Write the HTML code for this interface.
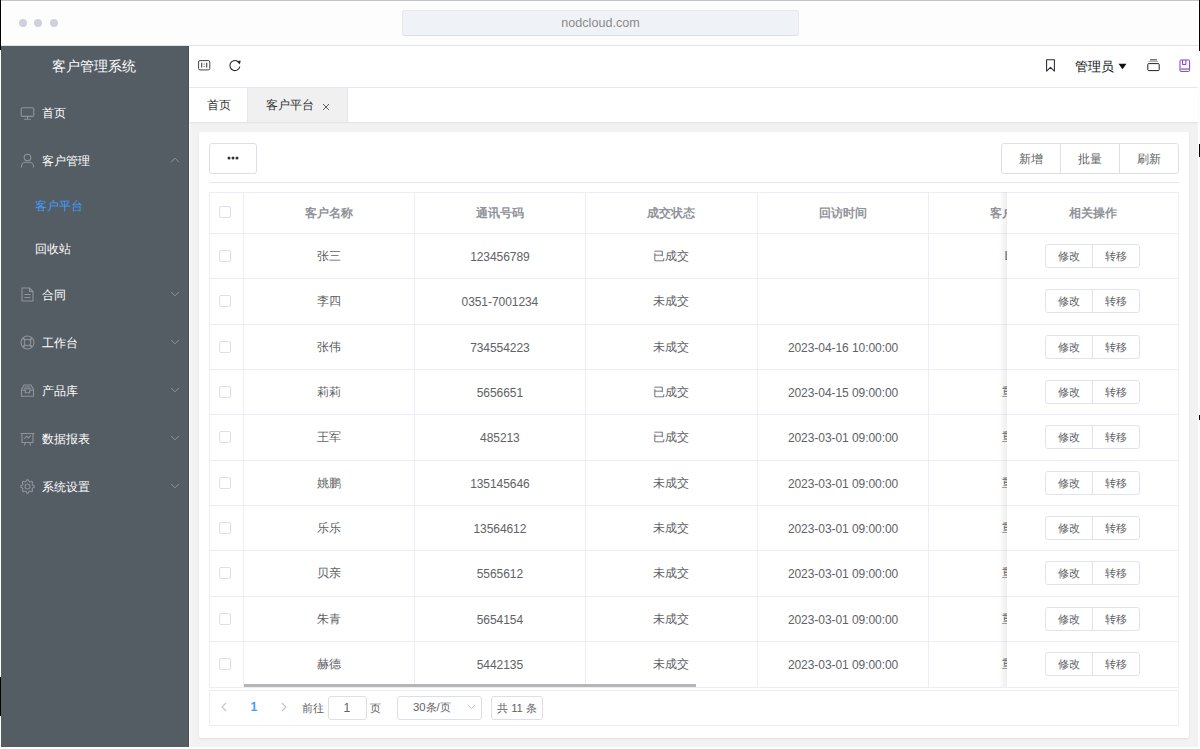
<!DOCTYPE html>
<html><head><meta charset="utf-8">
<style>
*{box-sizing:border-box;margin:0;padding:0}
html,body{width:1200px;height:749px;overflow:hidden;background:#fff;font-family:"Liberation Sans",sans-serif;font-weight:500}
.a{position:absolute}
#chrome{left:0;top:0;width:1200px;height:46px;background:#fdfdfe;border-top:1px solid #c4c4c4;border-bottom:1px solid #e2e3e6}
.dot{position:absolute;top:18px;width:8px;height:8px;border-radius:50%;background:#d0d1df}
#url{left:402px;top:10px;width:397px;height:26px;background:#eff2f6;border:1px solid #e6e8ec;border-bottom-color:#dedfe2;border-radius:3px;font-size:12.6px;color:#8a8a8a;text-align:center;line-height:24px}
#side{left:1px;top:46px;width:188px;height:701px;background:#545c64;border-right:1px solid #4a5058}
.mi{position:absolute;left:0;width:188px;color:#fff;font-size:12.2px;height:20px;line-height:20px}
.mi .t{position:absolute;left:42px;top:0.5px;white-space:nowrap}
.mi .ic{position:absolute;left:20px;top:3px;width:15px;height:15px}
.mi .ch{position:absolute;left:170px;top:7px;width:10px;height:6px}
.sub .t{left:34.5px}
#main{left:189px;top:46px;width:1009px;height:701px;background:#f2f2f2;border-left:1px solid #fff}
#hdr{left:189px;top:46px;width:1009px;height:42px;background:#fff;border-bottom:1px solid #e4e7ed}
#tabs{left:189px;top:88px;width:1009px;height:34px;background:#fff;box-shadow:0 1px 1.5px rgba(0,0,0,.07)}
.tab{position:absolute;top:0;height:33px;line-height:33px;font-size:12.2px;color:#333}
#card{left:199px;top:132px;width:990px;height:606px;background:#fff;border-radius:2px;box-shadow:0 1px 2px rgba(0,0,0,.08)}
.btn{position:absolute;border:1px solid #dcdfe6;border-radius:3px;background:#fff;color:#606266;font-size:12.2px;text-align:center}
.hl{position:absolute;height:1px;background:#ebeef5}
.vl{position:absolute;width:1px;background:#ebeef5}
.cell{position:absolute;height:20px;line-height:20px;font-size:12.2px;color:#606266;text-align:center;white-space:nowrap}
.num{font-size:12px;letter-spacing:-0.06px}
.hd{color:#909399;font-weight:bold}
.cb{position:absolute;width:12px;height:12px;border:1px solid #dcdfe6;border-radius:2px;background:#fff}
.ops{position:absolute;left:1045px;width:96px;height:24px}
.ops span{position:absolute;top:0;height:24px;width:48px;line-height:22px;text-align:center;font-size:11.3px;color:#606266;border:1px solid #e0e3e9;background:#fff}
.tabtxt{font-size:12.2px;color:#333;line-height:20px;white-space:nowrap}
.pg{font-size:11.3px;color:#606266;line-height:20px;white-space:nowrap}
.blk{position:absolute;background:#000;width:1px}
</style></head><body>
<div id="chrome" class="a">
  <div class="dot" style="left:19px"></div>
  <div class="dot" style="left:34px"></div>
  <div class="dot" style="left:50px"></div>
</div>
<div id="url" class="a">nodcloud.com</div>

<div id="side" class="a"></div>
<div id="sidebar">
<div class="a" style="left:0px;top:56.5px;width:188px;text-align:center;font-size:13.5px;color:#fff;line-height:20px;">客户管理系统</div>
<div class="mi" style="top:102px"><svg class="ic" viewBox="0 0 15 15" fill="none" stroke="#8f949a" stroke-width="1.1"><rect x="1.2" y="2.8" width="12.6" height="8.6" rx="1.5"/><path d="M7.5 11.4v2.6M4.2 14.2h6.6"/></svg><span class="t">首页</span></div>
<div class="mi" style="top:150.5px"><svg class="ic" style="top:2.5px" viewBox="0 0 15 15" fill="none" stroke="#8f949a" stroke-width="1.1"><circle cx="7.5" cy="4.5" r="3.3"/><path d="M1.5 14.5v-1.2c0-2.4 2-4 4.2-4h3.6c2.2 0 4.2 1.6 4.2 4v1.2"/></svg><span class="t">客户管理</span><svg class="ch" style="top:6.5px" viewBox="0 0 10 6" fill="none" stroke="#8f949a" stroke-width="1"><path d="M1 5.2L5 1.2L9 5.2"/></svg></div>
<div class="mi sub" style="top:195px;color:#409eff"><span class="t">客户平台</span></div>
<div class="mi sub" style="top:238.5px"><span class="t">回收站</span></div>
<div class="mi" style="top:284px"><svg class="ic" viewBox="0 0 15 15" fill="none" stroke="#8f949a" stroke-width="1.1"><path d="M2 1h7.5l3.5 3.5V14H2z"/><path d="M9.5 1v3.5H13M4.5 7.5h6M4.5 10.5h6"/></svg><span class="t">合同</span><svg class="ch" viewBox="0 0 10 6" fill="none" stroke="#8f949a" stroke-width="1"><path d="M1 0.8L5 4.8L9 0.8"/></svg></div>
<div class="mi" style="top:332px"><svg class="ic" viewBox="0 0 15 15" fill="none" stroke="#8f949a" stroke-width="1.1"><circle cx="7.5" cy="7.5" r="6.5"/><circle cx="7.5" cy="7.5" r="3.2"/><path d="M9.90 9.90L11.95 11.95M5.10 9.90L3.05 11.95M5.10 5.10L3.05 3.05M9.90 5.10L11.95 3.05" stroke-width="1.8"/></svg><span class="t">工作台</span><svg class="ch" viewBox="0 0 10 6" fill="none" stroke="#8f949a" stroke-width="1"><path d="M1 0.8L5 4.8L9 0.8"/></svg></div>
<div class="mi" style="top:380px"><svg class="ic" viewBox="0 0 15 15" fill="none" stroke="#8f949a" stroke-width="1.1"><path d="M1.5 13.3V6.5L4 2h7l2.5 4.5v6.8z"/><path d="M4.5 4h6M3.6 5.8h7.8M1.5 7.3h3.8v2.4h4.4V7.3h3.8"/></svg><span class="t">产品库</span><svg class="ch" viewBox="0 0 10 6" fill="none" stroke="#8f949a" stroke-width="1"><path d="M1 0.8L5 4.8L9 0.8"/></svg></div>
<div class="mi" style="top:428px"><svg class="ic" style="top:4px" viewBox="0 0 15 15" fill="none" stroke="#8f949a" stroke-width="1.1"><path d="M0.6 1.5h14M2 1.5v9h11v-9M5.5 10.5l-1.3 3M9.5 10.5l1.3 3"/><path d="M4.3 6.6l2.3-2.4 1.6 1.8 2.6-2.6"/></svg><span class="t">数据报表</span><svg class="ch" viewBox="0 0 10 6" fill="none" stroke="#8f949a" stroke-width="1"><path d="M1 0.8L5 4.8L9 0.8"/></svg></div>
<div class="mi" style="top:476px"><svg class="ic" viewBox="0 0 15 15" fill="none" stroke="#8f949a" stroke-width="1.1"><path d="M6.84 0.83L8.16 0.83L9.01 2.52L9.95 2.91L11.75 2.32L12.68 3.25L12.09 5.05L12.48 5.99L14.17 6.84L14.17 8.16L12.48 9.01L12.09 9.95L12.68 11.75L11.75 12.68L9.95 12.09L9.01 12.48L8.16 14.17L6.84 14.17L5.99 12.48L5.05 12.09L3.25 12.68L2.32 11.75L2.91 9.95L2.52 9.01L0.83 8.16L0.83 6.84L2.52 5.99L2.91 5.05L2.32 3.25L3.25 2.32L5.05 2.91L5.99 2.52z" stroke-linejoin="round"/><circle cx="7.5" cy="7.5" r="2.5"/></svg><span class="t">系统设置</span><svg class="ch" viewBox="0 0 10 6" fill="none" stroke="#8f949a" stroke-width="1"><path d="M1 0.8L5 4.8L9 0.8"/></svg></div>
</div>
<div id="main" class="a"></div>
<div id="hdr" class="a"></div>
<div id="tabs" class="a"></div>
<div id="card" class="a"></div>
<div class="btn" style="left:209px;top:143px;width:48px;height:31px"></div>
<svg class="a" style="left:226px;top:155px" width="14" height="6" viewBox="0 0 14 6"><circle cx="3" cy="3" r="1.5" fill="#333"/><circle cx="7" cy="3" r="1.5" fill="#333"/><circle cx="11" cy="3" r="1.5" fill="#333"/></svg>
<div class="btn" style="left:1001px;top:143px;width:178px;height:31px"></div>
<div class="vl" style="left:1060px;top:144px;height:29px;background:#dcdfe6"></div>
<div class="vl" style="left:1119px;top:144px;height:29px;background:#dcdfe6"></div>
<div class="cell" style="left:1001px;top:148.5px;width:59px;">新增</div>
<div class="cell" style="left:1060px;top:148.5px;width:59px;">批量</div>
<div class="cell" style="left:1119px;top:148.5px;width:59px;">刷新</div>
<div class="hl" style="left:209px;top:182px;width:970px;background:#e4e7ed"></div>
<div class="a" style="left:209px;top:192px;width:970px;height:495.8px;background:#fff"></div>
<div class="hl" style="left:209px;top:192px;width:970px"></div>
<div class="hl" style="left:209px;top:232.8px;width:970px"></div>
<div class="hl" style="left:209px;top:278.2px;width:970px"></div>
<div class="hl" style="left:209px;top:323.5px;width:970px"></div>
<div class="hl" style="left:209px;top:368.9px;width:970px"></div>
<div class="hl" style="left:209px;top:414.2px;width:970px"></div>
<div class="hl" style="left:209px;top:459.6px;width:970px"></div>
<div class="hl" style="left:209px;top:504.9px;width:970px"></div>
<div class="hl" style="left:209px;top:550.3px;width:970px"></div>
<div class="hl" style="left:209px;top:595.6px;width:970px"></div>
<div class="hl" style="left:209px;top:641.0px;width:970px"></div>
<div class="hl" style="left:209px;top:687px;width:970px"></div>
<div class="vl" style="left:209px;top:192px;height:494.8px"></div>
<div class="vl" style="left:243px;top:192px;height:494.8px"></div>
<div class="vl" style="left:414px;top:192px;height:494.8px"></div>
<div class="vl" style="left:585px;top:192px;height:494.8px"></div>
<div class="vl" style="left:757px;top:192px;height:494.8px"></div>
<div class="vl" style="left:928px;top:192px;height:494.8px"></div>
<div class="cell hd" style="left:242.8px;top:202.9px;width:171.6px">客户名称</div>
<div class="cell hd" style="left:414.4px;top:202.9px;width:171.0px">通讯号码</div>
<div class="cell hd" style="left:585.4px;top:202.9px;width:172.1px">成交状态</div>
<div class="cell hd" style="left:757.5px;top:202.9px;width:171.1px">回访时间</div>
<div class="cell hd" style="left:928.6px;top:202.9px;width:171.4px">客户等级</div>
<div class="cb" style="left:219px;top:206px"></div>
<div class="cb" style="left:219px;top:250.0px"></div>
<div class="cell" style="left:242.8px;top:246.0px;width:171.6px">张三</div>
<div class="cell num" style="left:414.4px;top:247.0px;width:171.0px">123456789</div>
<div class="cell" style="left:585.4px;top:246.0px;width:172.1px">已成交</div>
<div class="cell" style="left:928.6px;top:246.0px;width:171.4px">L</div>
<div class="cb" style="left:219px;top:295.3px"></div>
<div class="cell" style="left:242.8px;top:291.3px;width:171.6px">李四</div>
<div class="cell num" style="left:414.4px;top:292.3px;width:171.0px">0351-7001234</div>
<div class="cell" style="left:585.4px;top:291.3px;width:172.1px">未成交</div>
<div class="cb" style="left:219px;top:340.7px"></div>
<div class="cell" style="left:242.8px;top:336.7px;width:171.6px">张伟</div>
<div class="cell num" style="left:414.4px;top:337.7px;width:171.0px">734554223</div>
<div class="cell" style="left:585.4px;top:336.7px;width:172.1px">未成交</div>
<div class="cell num" style="left:757.5px;top:337.7px;width:171.1px">2023-04-16 10:00:00</div>
<div class="cb" style="left:219px;top:386.0px"></div>
<div class="cell" style="left:242.8px;top:382.0px;width:171.6px">莉莉</div>
<div class="cell num" style="left:414.4px;top:383.0px;width:171.0px">5656651</div>
<div class="cell" style="left:585.4px;top:382.0px;width:172.1px">已成交</div>
<div class="cell num" style="left:757.5px;top:383.0px;width:171.1px">2023-04-15 09:00:00</div>
<div class="cell" style="left:928.6px;top:382.0px;width:171.4px">重点</div>
<div class="cb" style="left:219px;top:431.4px"></div>
<div class="cell" style="left:242.8px;top:427.4px;width:171.6px">王军</div>
<div class="cell num" style="left:414.4px;top:428.4px;width:171.0px">485213</div>
<div class="cell" style="left:585.4px;top:427.4px;width:172.1px">已成交</div>
<div class="cell num" style="left:757.5px;top:428.4px;width:171.1px">2023-03-01 09:00:00</div>
<div class="cell" style="left:928.6px;top:427.4px;width:171.4px">重点</div>
<div class="cb" style="left:219px;top:476.7px"></div>
<div class="cell" style="left:242.8px;top:472.7px;width:171.6px">姚鹏</div>
<div class="cell num" style="left:414.4px;top:473.7px;width:171.0px">135145646</div>
<div class="cell" style="left:585.4px;top:472.7px;width:172.1px">未成交</div>
<div class="cell num" style="left:757.5px;top:473.7px;width:171.1px">2023-03-01 09:00:00</div>
<div class="cell" style="left:928.6px;top:472.7px;width:171.4px">重点</div>
<div class="cb" style="left:219px;top:522.1px"></div>
<div class="cell" style="left:242.8px;top:518.1px;width:171.6px">乐乐</div>
<div class="cell num" style="left:414.4px;top:519.1px;width:171.0px">13564612</div>
<div class="cell" style="left:585.4px;top:518.1px;width:172.1px">未成交</div>
<div class="cell num" style="left:757.5px;top:519.1px;width:171.1px">2023-03-01 09:00:00</div>
<div class="cell" style="left:928.6px;top:518.1px;width:171.4px">重点</div>
<div class="cb" style="left:219px;top:567.4px"></div>
<div class="cell" style="left:242.8px;top:563.4px;width:171.6px">贝亲</div>
<div class="cell num" style="left:414.4px;top:564.4px;width:171.0px">5565612</div>
<div class="cell" style="left:585.4px;top:563.4px;width:172.1px">未成交</div>
<div class="cell num" style="left:757.5px;top:564.4px;width:171.1px">2023-03-01 09:00:00</div>
<div class="cell" style="left:928.6px;top:563.4px;width:171.4px">重点</div>
<div class="cb" style="left:219px;top:612.8px"></div>
<div class="cell" style="left:242.8px;top:608.8px;width:171.6px">朱青</div>
<div class="cell num" style="left:414.4px;top:609.8px;width:171.0px">5654154</div>
<div class="cell" style="left:585.4px;top:608.8px;width:172.1px">未成交</div>
<div class="cell num" style="left:757.5px;top:609.8px;width:171.1px">2023-03-01 09:00:00</div>
<div class="cell" style="left:928.6px;top:608.8px;width:171.4px">重点</div>
<div class="cb" style="left:219px;top:658.1px"></div>
<div class="cell" style="left:242.8px;top:654.1px;width:171.6px">赫德</div>
<div class="cell num" style="left:414.4px;top:655.1px;width:171.0px">5442135</div>
<div class="cell" style="left:585.4px;top:654.1px;width:172.1px">未成交</div>
<div class="cell num" style="left:757.5px;top:655.1px;width:171.1px">2023-03-01 09:00:00</div>
<div class="cell" style="left:928.6px;top:654.1px;width:171.4px">重点</div>
<div class="a" style="left:999px;top:192px;width:9px;height:494.8px;background:linear-gradient(to right,rgba(0,0,0,0),rgba(0,0,0,.08))"></div>
<div class="a" style="left:1004.5px;top:245.5px;font-size:12.2px;color:#606266;line-height:20px">L</div>
<div class="a" style="left:1007.3px;top:192px;width:171.5px;height:495.8px;background:#fff;border-right:1px solid #ebeef5"></div>
<div class="hl" style="left:1007px;top:192px;width:172px"></div>
<div class="hl" style="left:1007px;top:232.8px;width:172px"></div>
<div class="hl" style="left:1007px;top:278.2px;width:172px"></div>
<div class="hl" style="left:1007px;top:323.5px;width:172px"></div>
<div class="hl" style="left:1007px;top:368.9px;width:172px"></div>
<div class="hl" style="left:1007px;top:414.2px;width:172px"></div>
<div class="hl" style="left:1007px;top:459.6px;width:172px"></div>
<div class="hl" style="left:1007px;top:504.9px;width:172px"></div>
<div class="hl" style="left:1007px;top:550.3px;width:172px"></div>
<div class="hl" style="left:1007px;top:595.6px;width:172px"></div>
<div class="hl" style="left:1007px;top:641.0px;width:172px"></div>
<div class="hl" style="left:1007px;top:687px;width:172px"></div>
<div class="cell hd" style="left:1007.3px;top:202.9px;width:171.5px">相关操作</div>
<div class="ops" style="top:244.0px"><span style="left:0;border-radius:3px 0 0 3px">修改</span><span style="left:47px;border-radius:0 3px 3px 0">转移</span></div>
<div class="ops" style="top:289.3px"><span style="left:0;border-radius:3px 0 0 3px">修改</span><span style="left:47px;border-radius:0 3px 3px 0">转移</span></div>
<div class="ops" style="top:334.7px"><span style="left:0;border-radius:3px 0 0 3px">修改</span><span style="left:47px;border-radius:0 3px 3px 0">转移</span></div>
<div class="ops" style="top:380.0px"><span style="left:0;border-radius:3px 0 0 3px">修改</span><span style="left:47px;border-radius:0 3px 3px 0">转移</span></div>
<div class="ops" style="top:425.4px"><span style="left:0;border-radius:3px 0 0 3px">修改</span><span style="left:47px;border-radius:0 3px 3px 0">转移</span></div>
<div class="ops" style="top:470.7px"><span style="left:0;border-radius:3px 0 0 3px">修改</span><span style="left:47px;border-radius:0 3px 3px 0">转移</span></div>
<div class="ops" style="top:516.1px"><span style="left:0;border-radius:3px 0 0 3px">修改</span><span style="left:47px;border-radius:0 3px 3px 0">转移</span></div>
<div class="ops" style="top:561.4px"><span style="left:0;border-radius:3px 0 0 3px">修改</span><span style="left:47px;border-radius:0 3px 3px 0">转移</span></div>
<div class="ops" style="top:606.8px"><span style="left:0;border-radius:3px 0 0 3px">修改</span><span style="left:47px;border-radius:0 3px 3px 0">转移</span></div>
<div class="ops" style="top:652.1px"><span style="left:0;border-radius:3px 0 0 3px">修改</span><span style="left:47px;border-radius:0 3px 3px 0">转移</span></div>
<div class="a" style="left:243.5px;top:684px;width:452.5px;height:3px;background:#b5b5b5"></div>
<div class="a" style="left:209px;top:689.5px;width:970px;height:36px;border:1px solid #ebeef5;background:#fff"></div>
<svg class="a" style="left:220px;top:702px" width="8" height="10" viewBox="0 0 8 10" fill="none" stroke="#c0c4cc" stroke-width="1.1"><path d="M6 1L2 5l4 4"/></svg>
<div class="a" style="left:248px;top:697px;width:12px;text-align:center;font-size:12.2px;font-weight:bold;color:#409eff;line-height:20px">1</div>
<svg class="a" style="left:280px;top:702px" width="8" height="10" viewBox="0 0 8 10" fill="none" stroke="#c0c4cc" stroke-width="1.1"><path d="M2 1l4 4-4 4"/></svg>
<div class="a pg" style="left:301.5px;top:697.5px">前往</div>
<div class="btn" style="left:327.5px;top:695.5px;width:39px;height:24px;line-height:22px;color:#606266">1</div>
<div class="a pg" style="left:370px;top:697.5px">页</div>
<div class="btn" style="left:396.5px;top:695.5px;width:85px;height:24px"></div>
<div class="a pg" style="left:413px;top:697px">30条/页</div>
<svg class="a" style="left:466.5px;top:704px" width="9" height="6" viewBox="0 0 9 6" fill="none" stroke="#c0c4cc" stroke-width="1"><path d="M1 1l3.5 3.5L8 1"/></svg>
<div class="btn" style="left:491px;top:695.5px;width:52px;height:24px"></div>
<div class="a pg" style="left:497px;top:697.5px">共 11 条</div>
<div id="hdrc">
<svg class="a" style="left:197px;top:59px" width="14" height="12" viewBox="0 0 14 12" fill="none" stroke="#444" stroke-width="1"><rect x="1.6" y="1.6" width="11.2" height="9.3" rx="1.4"/><path d="M4.7 3.8v4.8M9.7 3.8v4.8" stroke-width="1.1"/><path d="M7.2 4.6v0.9M7.2 7v0.9" stroke-width="0.9"/></svg>
<svg class="a" style="left:228px;top:59px" width="14" height="13" viewBox="0 0 14 13" fill="none" stroke="#222" stroke-width="1.05"><path d="M11.82 7.47A5.0 5.0 0 1 1 9.77 2.50"/><path d="M9.2 2.6L12.3 1.9L11.6 4.9z" fill="#111" stroke-width="0.6"/></svg>
<svg class="a" style="left:1045px;top:59px" width="11" height="13" viewBox="0 0 11 13" fill="none" stroke="#2b2533" stroke-width="1.05"><path d="M1.6 0.8h7.8v11.3L5.5 8.4l-3.9 3.7z" stroke-linejoin="round"/></svg>
<div class="a" style="left:1074.5px;top:56.5px;font-size:13.2px;color:#111;line-height:20px;white-space:nowrap">管理员</div>
<svg class="a" style="left:1118px;top:63px" width="9" height="7" viewBox="0 0 9 7"><path d="M0.5 0.8h8L4.5 6.2z" fill="#111"/></svg>
<svg class="a" style="left:1146px;top:58px" width="15" height="14" viewBox="0 0 15 14"><rect x="4" y="1" width="7" height="1.5" fill="#777"/><rect x="2.6" y="3" width="9.6" height="0.8" fill="#999"/><rect x="1.8" y="5.6" width="11.4" height="7" rx="0.9" fill="none" stroke="#222" stroke-width="1"/></svg>
<svg class="a" style="left:1177px;top:59px" width="14" height="14" viewBox="0 0 14 14" fill="none" stroke="#7e3cc9" stroke-width="1"><rect x="3" y="1" width="9.6" height="11.4" rx="1"/><rect x="3.3" y="9.2" width="9" height="1.8" fill="#a98bd6" stroke="none"/><path d="M5.6 1.2v4.3h3.3V1.2"/></svg>
</div>
<div class="a" style="left:189px;top:88px;width:59px;height:34px;background:#fff;border-right:1px solid #e4e7ed"></div>
<div class="a" style="left:248px;top:88px;width:100px;height:34px;background:#f0f0f0;border-right:1px solid #e4e7ed"></div>
<div class="a tabtxt" style="left:207px;top:94.5px">首页</div>
<div class="a tabtxt" style="left:265.5px;top:95px">客户平台</div>
<svg class="a" style="left:322px;top:102.5px" width="8" height="8" viewBox="0 0 8 8" stroke="#555" stroke-width="0.95"><path d="M1 1l6 6M7 1L1 7"/></svg>


<div class="blk" style="left:0;top:0;height:50px"></div>
<div class="blk" style="left:1199px;top:0;height:51px"></div>
<div class="blk" style="left:0;top:677px;height:39px"></div>
<div class="blk" style="left:1199px;top:144px;height:13px"></div>
<div class="blk" style="left:1199px;top:415px;height:5px"></div>
</body></html>
